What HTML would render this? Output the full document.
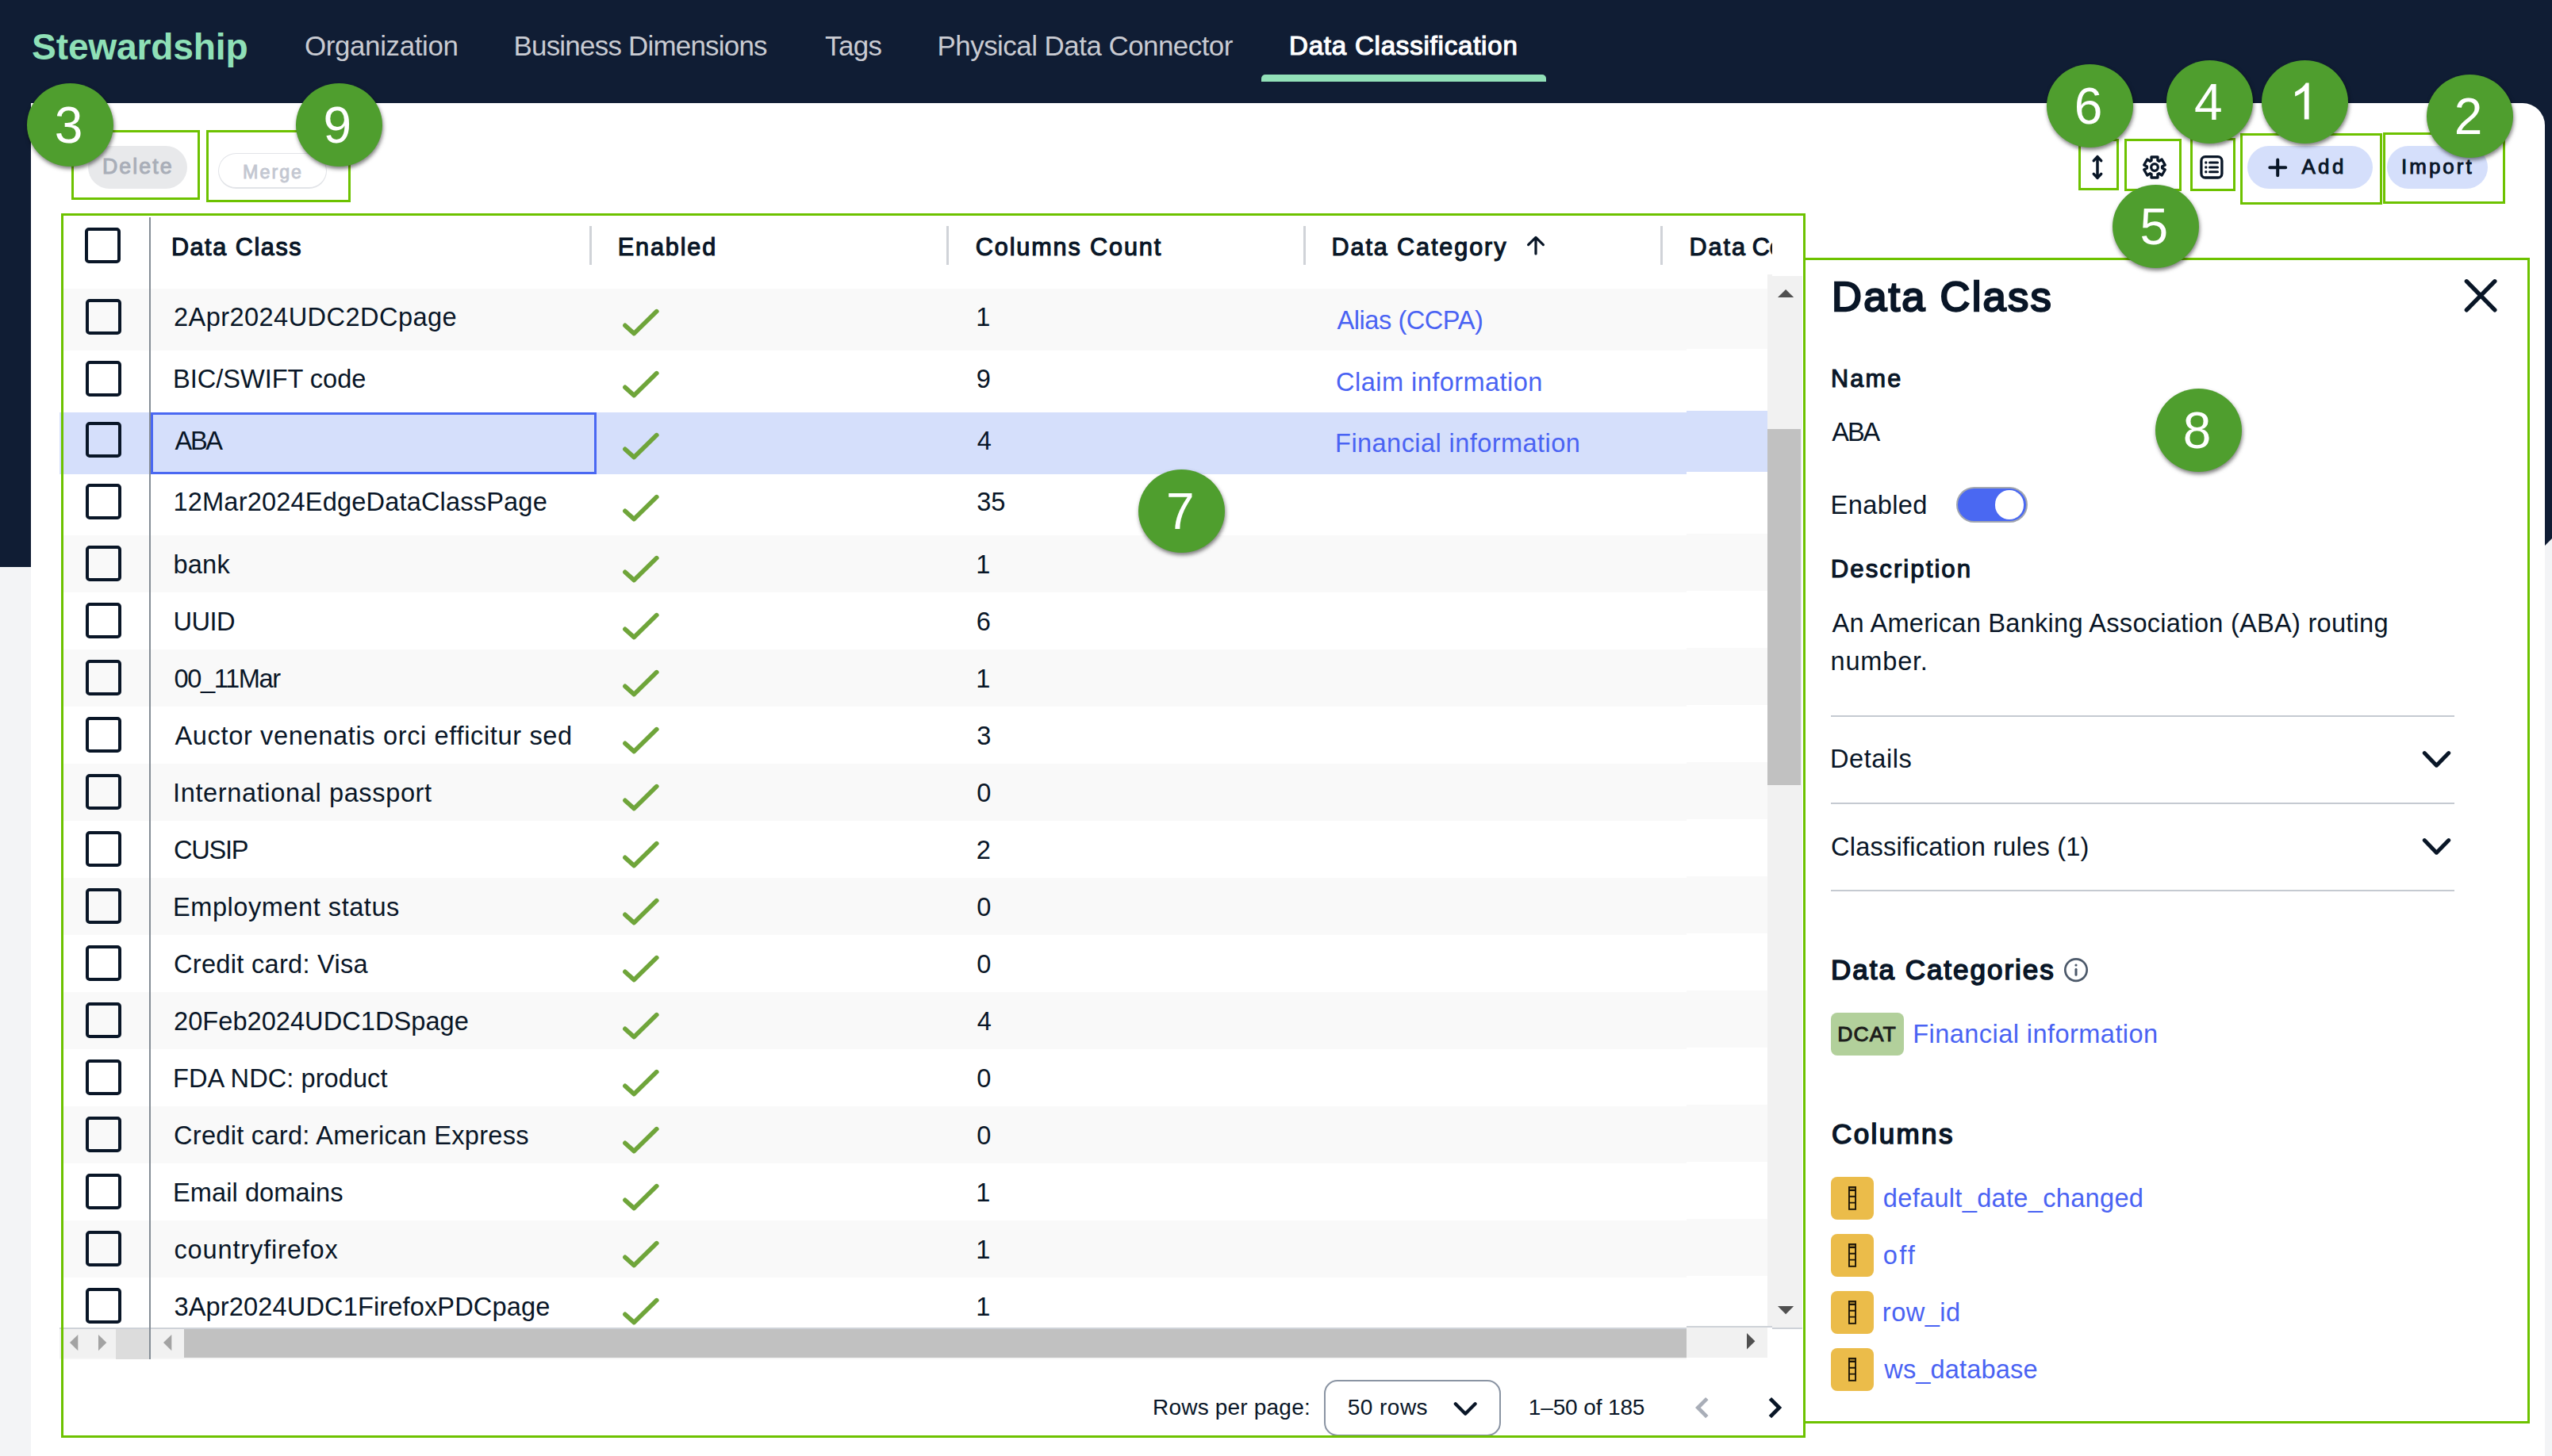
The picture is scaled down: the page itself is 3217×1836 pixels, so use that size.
<!DOCTYPE html>
<html lang="en"><head><meta charset="utf-8"><title>Stewardship - Data Classification</title>
<style>
html,body{margin:0;padding:0}
html{width:3217px;height:1836px;overflow:hidden}
body{width:3217px;height:1836px;position:relative;overflow:hidden;background:#f3f4f6;font-family:"Liberation Sans",sans-serif;color:#091627}
div,span,svg{position:absolute;box-sizing:border-box}
.t{line-height:0;white-space:nowrap}
.navy{left:0;top:0;width:3217px;height:715px;background:#101d34;clip-path:polygon(0 0,3217px 0,3217px 679px,3207px 689px,3207px 715px,0 715px)}
.card{left:39px;top:129.7px;width:3169px;height:1706.3px;background:#fff;border-top-right-radius:28px}
.ann{border:3px solid #6dc200;box-sizing:content-box}
.circ{width:109px;height:105px;border-radius:50%;background:#4f9e2e;color:#fff;font-size:64px;line-height:106.2px;text-align:center;text-indent:-4px;box-shadow:1px 3px 5px rgba(0,0,0,.5)}
.cb{width:45px;height:45px;border:4.5px solid #091627;border-radius:5px;left:108.4px}
.row{left:75px;width:2153px}
.row.g{background:#f9f9f9;left:80px;width:2148px}
.row.w{background:#fff;left:80px;width:2148px}
.row.s{background:#d5dffb}
.rp{left:2126px;width:102px}
.sep{width:3px;top:285px;height:49px;background:#d0d3d8}
.pill{border-radius:40px}
.div{left:2308px;width:786px;height:2.3px;background:#c5cad1}
.colic{left:2307.8px;width:54.2px;height:54px;border-radius:8px;background:#ebbc4a}
</style></head><body>
<div class="navy"></div>

<header>
<span class="t" style="left:40.1px;top:59.0px;font-size:46.2px;letter-spacing:-0.20px;font-weight:700;color:#8fe0b7;">Stewardship</span>
<nav>
<span class="t" style="left:383.9px;top:58.1px;font-size:34.9px;letter-spacing:-0.34px;color:#c9cbd2;">Organization</span>
<span class="t" style="left:647.5px;top:58.1px;font-size:34.9px;letter-spacing:-0.75px;color:#c9cbd2;">Business Dimensions</span>
<span class="t" style="left:1040.1px;top:58.1px;font-size:34.9px;letter-spacing:-0.63px;color:#c9cbd2;">Tags</span>
<span class="t" style="left:1181.6px;top:58.1px;font-size:34.9px;letter-spacing:-0.51px;color:#c9cbd2;">Physical Data Connector</span>
<span class="t" style="left:1625.0px;top:58.1px;font-size:33.1px;letter-spacing:0.77px;-webkit-text-stroke:1.22px;color:#fff;">Data Classification</span>
<div style="left:1590px;top:94px;width:359px;height:9px;background:#92e0b8;border-radius:5px 5px 0 0"></div>
</nav></header>
<main class="card" style="position:absolute"></main>
<div class="pill" style="left:111px;top:184px;width:125px;height:54px;background:#e8e9eb"></div>
<span class="t" style="left:128.9px;top:210.2px;font-size:26.8px;letter-spacing:2.04px;-webkit-text-stroke:0.99px;color:#a9aeb8;">Delete</span>
<div class="pill" style="left:275px;top:193px;width:137px;height:45px;background:#fff;border:1.6px solid #e2e4e8;border-bottom-width:2.2px"></div>
<span class="t" style="left:306.0px;top:216.5px;font-size:23.3px;letter-spacing:2.01px;-webkit-text-stroke:0.86px;color:#c3c7d1;">Merge</span>
<svg style="left:2630px;top:190px" width="28" height="42" viewBox="0 0 28 42" fill="none" stroke="#091627" stroke-width="3.5" stroke-linecap="round" stroke-linejoin="round"><path d="M14 7.6V34.4M9.3 12.6L14 7.6L18.7 12.6M9.3 29.4L14 34.4L18.7 29.4"/></svg>
<svg style="left:2696px;top:191px" width="40" height="40" viewBox="0 0 40 40" fill="none" stroke="#091627" stroke-width="3.3" stroke-linejoin="round"><path d="M16.09 11.23 L15.98 7.01 L24.02 7.01 L23.91 11.23 L25.63 12.23 L29.24 10.02 L33.26 16.98 L29.55 19.01 L29.55 20.99 L33.26 23.02 L29.24 29.98 L25.63 27.77 L23.91 28.77 L24.02 32.99 L15.98 32.99 L16.09 28.77 L14.37 27.77 L10.76 29.98 L6.74 23.02 L10.45 20.99 L10.45 19.01 L6.74 16.98 L10.76 10.02 L14.37 12.23Z"/><circle cx="20" cy="20" r="4.3"/></svg>
<svg style="left:2771px;top:194px" width="34" height="34" viewBox="0 0 34 34" fill="none" stroke="#091627" stroke-width="3.3" stroke-linecap="round"><rect x="3.9" y="3.7" width="26" height="26.3" rx="5"/><path d="M14.5 11H24.5M14.5 17H24.5M14.5 22.7H24.5" stroke-width="3"/><g fill="#091627" stroke="none"><circle cx="9.8" cy="11" r="1.7"/><circle cx="9.8" cy="17" r="1.7"/><circle cx="9.8" cy="22.7" r="1.7"/></g></svg>
<div class="pill" style="left:2833px;top:183.6px;width:158.4px;height:54.4px;background:#d5dffb"></div>
<svg style="left:2857px;top:197px" width="28" height="28" viewBox="0 0 28 28" fill="none" stroke="#091627" stroke-width="4" stroke-linecap="round"><path d="M14.2 4.4V24.2M4.3 14.3H24.2"/></svg>
<span class="t" style="left:2901.4px;top:210.4px;font-size:25.9px;letter-spacing:3.41px;-webkit-text-stroke:0.96px;">Add</span>
<div class="pill" style="left:3009px;top:183.6px;width:127px;height:54.4px;background:#d5dffb"></div>
<span class="t" style="left:3027.0px;top:210.4px;font-size:25.9px;letter-spacing:3.07px;-webkit-text-stroke:0.96px;">Import</span>
<section id="grid">
<div class="cb" style="left:106.6px;top:287px"></div>
<span class="t" style="left:215.9px;top:310.6px;font-size:30.6px;letter-spacing:1.56px;-webkit-text-stroke:1.13px;">Data Class</span>
<div class="sep" style="left:743px"></div>
<div class="sep" style="left:1193px"></div>
<div class="sep" style="left:1643px"></div>
<div class="sep" style="left:2093px"></div>
<span class="t" style="left:778.8px;top:310.6px;font-size:30.6px;letter-spacing:1.85px;-webkit-text-stroke:1.13px;">Enabled</span>
<span class="t" style="left:1229.8px;top:310.6px;font-size:30.6px;letter-spacing:1.88px;-webkit-text-stroke:1.13px;">Columns Count</span>
<span class="t" style="left:1678.5px;top:310.6px;font-size:30.6px;letter-spacing:1.89px;-webkit-text-stroke:1.13px;">Data Category</span>
<svg style="left:1920px;top:294px" width="32" height="32" viewBox="0 0 32 32" fill="none" stroke="#091627" stroke-width="3.2" stroke-linecap="round" stroke-linejoin="round"><path d="M16 26V6M6.6 14.6L16 5.4L25.4 14.6"/></svg>
<div style="left:2100px;top:280px;width:133.8px;height:70px;overflow:hidden"><span class="t" style="left:29.5px;top:30.6px;font-size:30.6px;letter-spacing:1.94px;-webkit-text-stroke:1.13px;">Data</span><span class="t" style="left:108.7px;top:30.6px;font-size:30.6px;-webkit-text-stroke:1.13px;">Concept</span></div>
<div id="body" style="left:0;top:364.4px;width:2228px;height:1309.6px;overflow:hidden">
<div class="row g" style="top:0.0px;height:77.75px"></div>
<div class="row g rp" style="left:2126px;width:102px;top:-2.2px;height:77.75px"></div>
<div class="cb" style="top:12.5px"></div>
<span class="t" style="left:219.0px;top:35.8px;font-size:32.6px;letter-spacing:0.42px;">2Apr2024UDC2DCpage</span>
<svg style="left:780px;top:20.0px" width="56" height="46" viewBox="0 0 56 46" fill="none" stroke="#6fa53a" stroke-width="5.6" stroke-linecap="round" stroke-linejoin="round"><path d="M7.9 26.3L19.3 36.6L47.8 8.6"/></svg>
<span class="t" style="left:1230.2px;top:35.8px;font-size:32.6px;">1</span>
<span class="t" style="left:1685.6px;top:39.5px;font-size:32.6px;letter-spacing:-0.48px;color:#4a63f3;">Alias (CCPA)</span>
<div class="row w" style="top:77.8px;height:77.75px"></div>
<div class="row w rp" style="left:2126px;width:102px;top:75.5px;height:77.75px"></div>
<div class="cb" style="top:90.2px"></div>
<span class="t" style="left:218.0px;top:113.6px;font-size:32.6px;letter-spacing:-0.03px;">BIC/SWIFT code</span>
<svg style="left:780px;top:97.8px" width="56" height="46" viewBox="0 0 56 46" fill="none" stroke="#6fa53a" stroke-width="5.6" stroke-linecap="round" stroke-linejoin="round"><path d="M7.9 26.3L19.3 36.6L47.8 8.6"/></svg>
<span class="t" style="left:1230.7px;top:113.6px;font-size:32.6px;">9</span>
<span class="t" style="left:1684.1px;top:117.3px;font-size:32.6px;letter-spacing:0.43px;color:#4a63f3;">Claim information</span>
<div class="row s" style="top:155.5px;height:77.75px"></div>
<div class="row s rp" style="left:2126px;width:102px;top:153.3px;height:77.75px"></div>
<div style="left:190px;top:155.5px;width:562px;height:77.75px;border:3.6px solid #4a68f2"></div>
<div class="cb" style="top:168.0px"></div>
<span class="t" style="left:220.5px;top:191.3px;font-size:32.6px;letter-spacing:-2.35px;">ABA</span>
<svg style="left:780px;top:175.5px" width="56" height="46" viewBox="0 0 56 46" fill="none" stroke="#6fa53a" stroke-width="5.6" stroke-linecap="round" stroke-linejoin="round"><path d="M7.9 26.3L19.3 36.6L47.8 8.6"/></svg>
<span class="t" style="left:1231.7px;top:191.3px;font-size:32.6px;">4</span>
<span class="t" style="left:1683.1px;top:195.0px;font-size:32.6px;letter-spacing:0.41px;color:#4a63f3;">Financial information</span>
<div class="row w" style="top:233.2px;height:77.75px"></div>
<div class="row w rp" style="left:2126px;width:102px;top:231.1px;height:77.75px"></div>
<div class="cb" style="top:245.8px"></div>
<span class="t" style="left:218.5px;top:269.1px;font-size:32.6px;letter-spacing:0.16px;">12Mar2024EdgeDataClassPage</span>
<svg style="left:780px;top:253.2px" width="56" height="46" viewBox="0 0 56 46" fill="none" stroke="#6fa53a" stroke-width="5.6" stroke-linecap="round" stroke-linejoin="round"><path d="M7.9 26.3L19.3 36.6L47.8 8.6"/></svg>
<span class="t" style="left:1231.2px;top:269.1px;font-size:32.6px;">35</span>
<div class="row g" style="top:311.0px;height:72px"></div>
<div class="row g rp" style="left:2126px;width:102px;top:308.8px;height:72px"></div>
<div class="cb" style="top:324.1px"></div>
<span class="t" style="left:218.5px;top:347.5px;font-size:32.6px;letter-spacing:0.18px;">bank</span>
<svg style="left:780px;top:331.0px" width="56" height="46" viewBox="0 0 56 46" fill="none" stroke="#6fa53a" stroke-width="5.6" stroke-linecap="round" stroke-linejoin="round"><path d="M7.9 26.3L19.3 36.6L47.8 8.6"/></svg>
<span class="t" style="left:1230.2px;top:347.5px;font-size:32.6px;">1</span>
<div class="row w" style="top:383.0px;height:72px"></div>
<div class="row w rp" style="left:2126px;width:102px;top:380.8px;height:72px"></div>
<div class="cb" style="top:396.1px"></div>
<span class="t" style="left:218.5px;top:419.5px;font-size:32.6px;letter-spacing:-0.54px;">UUID</span>
<svg style="left:780px;top:403.0px" width="56" height="46" viewBox="0 0 56 46" fill="none" stroke="#6fa53a" stroke-width="5.6" stroke-linecap="round" stroke-linejoin="round"><path d="M7.9 26.3L19.3 36.6L47.8 8.6"/></svg>
<span class="t" style="left:1230.7px;top:419.5px;font-size:32.6px;">6</span>
<div class="row g" style="top:455.0px;height:72px"></div>
<div class="row g rp" style="left:2126px;width:102px;top:452.8px;height:72px"></div>
<div class="cb" style="top:468.1px"></div>
<span class="t" style="left:219.5px;top:491.5px;font-size:32.6px;letter-spacing:-1.40px;">00_11Mar</span>
<svg style="left:780px;top:475.0px" width="56" height="46" viewBox="0 0 56 46" fill="none" stroke="#6fa53a" stroke-width="5.6" stroke-linecap="round" stroke-linejoin="round"><path d="M7.9 26.3L19.3 36.6L47.8 8.6"/></svg>
<span class="t" style="left:1230.2px;top:491.5px;font-size:32.6px;">1</span>
<div class="row w" style="top:527.0px;height:72px"></div>
<div class="row w rp" style="left:2126px;width:102px;top:524.8px;height:72px"></div>
<div class="cb" style="top:540.1px"></div>
<span class="t" style="left:220.5px;top:563.5px;font-size:32.6px;letter-spacing:0.63px;">Auctor venenatis orci efficitur sed</span>
<svg style="left:780px;top:547.0px" width="56" height="46" viewBox="0 0 56 46" fill="none" stroke="#6fa53a" stroke-width="5.6" stroke-linecap="round" stroke-linejoin="round"><path d="M7.9 26.3L19.3 36.6L47.8 8.6"/></svg>
<span class="t" style="left:1231.2px;top:563.5px;font-size:32.6px;">3</span>
<div class="row g" style="top:599.0px;height:72px"></div>
<div class="row g rp" style="left:2126px;width:102px;top:596.8px;height:72px"></div>
<div class="cb" style="top:612.1px"></div>
<span class="t" style="left:218.0px;top:635.5px;font-size:32.6px;letter-spacing:0.61px;">International passport</span>
<svg style="left:780px;top:619.0px" width="56" height="46" viewBox="0 0 56 46" fill="none" stroke="#6fa53a" stroke-width="5.6" stroke-linecap="round" stroke-linejoin="round"><path d="M7.9 26.3L19.3 36.6L47.8 8.6"/></svg>
<span class="t" style="left:1231.2px;top:635.5px;font-size:32.6px;">0</span>
<div class="row w" style="top:671.0px;height:72px"></div>
<div class="row w rp" style="left:2126px;width:102px;top:668.8px;height:72px"></div>
<div class="cb" style="top:684.1px"></div>
<span class="t" style="left:219.0px;top:707.5px;font-size:32.6px;letter-spacing:-1.26px;">CUSIP</span>
<svg style="left:780px;top:691.0px" width="56" height="46" viewBox="0 0 56 46" fill="none" stroke="#6fa53a" stroke-width="5.6" stroke-linecap="round" stroke-linejoin="round"><path d="M7.9 26.3L19.3 36.6L47.8 8.6"/></svg>
<span class="t" style="left:1230.7px;top:707.5px;font-size:32.6px;">2</span>
<div class="row g" style="top:743.0px;height:72px"></div>
<div class="row g rp" style="left:2126px;width:102px;top:740.8px;height:72px"></div>
<div class="cb" style="top:756.1px"></div>
<span class="t" style="left:218.0px;top:779.5px;font-size:32.6px;letter-spacing:0.52px;">Employment status</span>
<svg style="left:780px;top:763.0px" width="56" height="46" viewBox="0 0 56 46" fill="none" stroke="#6fa53a" stroke-width="5.6" stroke-linecap="round" stroke-linejoin="round"><path d="M7.9 26.3L19.3 36.6L47.8 8.6"/></svg>
<span class="t" style="left:1231.2px;top:779.5px;font-size:32.6px;">0</span>
<div class="row w" style="top:815.0px;height:72px"></div>
<div class="row w rp" style="left:2126px;width:102px;top:812.8px;height:72px"></div>
<div class="cb" style="top:828.1px"></div>
<span class="t" style="left:219.0px;top:851.5px;font-size:32.6px;letter-spacing:0.28px;">Credit card: Visa</span>
<svg style="left:780px;top:835.0px" width="56" height="46" viewBox="0 0 56 46" fill="none" stroke="#6fa53a" stroke-width="5.6" stroke-linecap="round" stroke-linejoin="round"><path d="M7.9 26.3L19.3 36.6L47.8 8.6"/></svg>
<span class="t" style="left:1231.2px;top:851.5px;font-size:32.6px;">0</span>
<div class="row g" style="top:887.0px;height:72px"></div>
<div class="row g rp" style="left:2126px;width:102px;top:884.8px;height:72px"></div>
<div class="cb" style="top:900.1px"></div>
<span class="t" style="left:219.0px;top:923.5px;font-size:32.6px;letter-spacing:0.03px;">20Feb2024UDC1DSpage</span>
<svg style="left:780px;top:907.0px" width="56" height="46" viewBox="0 0 56 46" fill="none" stroke="#6fa53a" stroke-width="5.6" stroke-linecap="round" stroke-linejoin="round"><path d="M7.9 26.3L19.3 36.6L47.8 8.6"/></svg>
<span class="t" style="left:1231.7px;top:923.5px;font-size:32.6px;">4</span>
<div class="row w" style="top:959.0px;height:72px"></div>
<div class="row w rp" style="left:2126px;width:102px;top:956.8px;height:72px"></div>
<div class="cb" style="top:972.1px"></div>
<span class="t" style="left:218.0px;top:995.5px;font-size:32.6px;letter-spacing:0.05px;">FDA NDC: product</span>
<svg style="left:780px;top:979.0px" width="56" height="46" viewBox="0 0 56 46" fill="none" stroke="#6fa53a" stroke-width="5.6" stroke-linecap="round" stroke-linejoin="round"><path d="M7.9 26.3L19.3 36.6L47.8 8.6"/></svg>
<span class="t" style="left:1231.2px;top:995.5px;font-size:32.6px;">0</span>
<div class="row g" style="top:1031.0px;height:72px"></div>
<div class="row g rp" style="left:2126px;width:102px;top:1028.8px;height:72px"></div>
<div class="cb" style="top:1044.1px"></div>
<span class="t" style="left:219.0px;top:1067.5px;font-size:32.6px;letter-spacing:0.27px;">Credit card: American Express</span>
<svg style="left:780px;top:1051.0px" width="56" height="46" viewBox="0 0 56 46" fill="none" stroke="#6fa53a" stroke-width="5.6" stroke-linecap="round" stroke-linejoin="round"><path d="M7.9 26.3L19.3 36.6L47.8 8.6"/></svg>
<span class="t" style="left:1231.2px;top:1067.5px;font-size:32.6px;">0</span>
<div class="row w" style="top:1103.0px;height:72px"></div>
<div class="row w rp" style="left:2126px;width:102px;top:1100.8px;height:72px"></div>
<div class="cb" style="top:1116.1px"></div>
<span class="t" style="left:218.0px;top:1139.5px;font-size:32.6px;letter-spacing:0.07px;">Email domains</span>
<svg style="left:780px;top:1123.0px" width="56" height="46" viewBox="0 0 56 46" fill="none" stroke="#6fa53a" stroke-width="5.6" stroke-linecap="round" stroke-linejoin="round"><path d="M7.9 26.3L19.3 36.6L47.8 8.6"/></svg>
<span class="t" style="left:1230.2px;top:1139.5px;font-size:32.6px;">1</span>
<div class="row g" style="top:1175.0px;height:72px"></div>
<div class="row g rp" style="left:2126px;width:102px;top:1172.8px;height:72px"></div>
<div class="cb" style="top:1188.1px"></div>
<span class="t" style="left:219.5px;top:1211.5px;font-size:32.6px;letter-spacing:0.83px;">countryfirefox</span>
<svg style="left:780px;top:1195.0px" width="56" height="46" viewBox="0 0 56 46" fill="none" stroke="#6fa53a" stroke-width="5.6" stroke-linecap="round" stroke-linejoin="round"><path d="M7.9 26.3L19.3 36.6L47.8 8.6"/></svg>
<span class="t" style="left:1230.2px;top:1211.5px;font-size:32.6px;">1</span>
<div class="row w" style="top:1247.0px;height:72px"></div>
<div class="row w rp" style="left:2126px;width:102px;top:1244.8px;height:72px"></div>
<div class="cb" style="top:1260.1px"></div>
<span class="t" style="left:219.5px;top:1283.5px;font-size:32.6px;letter-spacing:0.12px;">3Apr2024UDC1FirefoxPDCpage</span>
<svg style="left:780px;top:1267.0px" width="56" height="46" viewBox="0 0 56 46" fill="none" stroke="#6fa53a" stroke-width="5.6" stroke-linecap="round" stroke-linejoin="round"><path d="M7.9 26.3L19.3 36.6L47.8 8.6"/></svg>
<span class="t" style="left:1230.2px;top:1283.5px;font-size:32.6px;">1</span>
</div>
<div style="left:188px;top:274px;width:2.2px;height:1439.5px;background:#858d96"></div>
<div style="left:2228px;top:348px;width:44px;height:1326px;background:#f1f1f1"></div>
<div style="left:2228px;top:346px;width:6px;height:2px;background:#f1f1f1"></div>
<div style="left:2228px;top:541px;width:42px;height:449.3px;background:#c1c1c1"></div>
<svg style="left:2240.9px;top:364.8px" width="21" height="11" viewBox="0 0 21 11"><path d="M0 10.1L10.1 0L20.2 10.1Z" fill="#505050"/></svg>
<svg style="left:2240.8px;top:1646.8px" width="21" height="11" viewBox="0 0 21 11"><path d="M0 0L10.1 10.3L20.2 0Z" fill="#505050"/></svg>
<div style="left:75px;top:1674px;width:2051px;height:2px;background:#ced2d8"></div>
<div style="left:75px;top:1676px;width:2051px;height:36px;background:#f1f1f1"></div>
<div style="left:75px;top:1712px;width:2051px;height:2px;background:#f5f5f5"></div>
<div style="left:2126px;top:1672px;width:108px;height:2px;background:#ced2d8"></div>
<div style="left:2126px;top:1674px;width:102px;height:38px;background:#f1f1f1"></div>
<div style="left:2234px;top:1674px;width:38px;height:2px;background:#ced2d8"></div>
<div style="left:146px;top:1676px;width:42px;height:38px;background:#dcdcdc"></div>
<div style="left:232px;top:1676px;width:1894px;height:36px;background:#c1c1c1"></div>
<svg style="left:87.8px;top:1682.9px" width="11" height="21" viewBox="0 0 11 21"><path d="M10.3 0L0 10.1L10.3 20.2Z" fill="#a3a3a3"/></svg>
<svg style="left:123.9px;top:1682.9px" width="11" height="21" viewBox="0 0 11 21"><path d="M0 0L10.3 10.1L0 20.2Z" fill="#a3a3a3"/></svg>
<svg style="left:205.8px;top:1682.9px" width="11" height="21" viewBox="0 0 11 21"><path d="M10.3 0L0 10.1L10.3 20.2Z" fill="#a3a3a3"/></svg>
<svg style="left:2201.9px;top:1680.9px" width="11" height="21" viewBox="0 0 11 21"><path d="M0 0L10.4 10.2L0 20.4Z" fill="#505050"/></svg>
<div style="left:188px;top:1674px;width:2.2px;height:40px;background:#858d96"></div>
<span class="t" style="left:1453.1px;top:1775.2px;font-size:28px;letter-spacing:0.19px;">Rows per page:</span>
<div style="left:1669.4px;top:1740px;width:222.3px;height:71px;border:2.2px solid #8a94a3;border-radius:17px;background:#fff"></div>
<span class="t" style="left:1698.7px;top:1775.2px;font-size:28px;letter-spacing:0.48px;">50 rows</span>
<svg style="left:1827px;top:1762px" width="40" height="30" viewBox="0 0 40 30" fill="none" stroke="#091627" stroke-width="4.2" stroke-linecap="round" stroke-linejoin="round"><path d="M7.8 8.2L20.2 20.8L32.6 8.2"/></svg>
<span class="t" style="left:1926.8px;top:1775.2px;font-size:28px;letter-spacing:-0.13px;">1–50 of 185</span>
<svg style="left:2130px;top:1757px" width="30" height="36" viewBox="0 0 30 36" fill="none" stroke="#a9aeb8" stroke-width="4.8" stroke-linejoin="miter"><path d="M21.8 6.6L10.4 18.1L21.8 29.6"/></svg>
<svg style="left:2222px;top:1757px" width="30" height="36" viewBox="0 0 30 36" fill="none" stroke="#091627" stroke-width="4.8" stroke-linejoin="miter"><path d="M9.4 6.6L20.8 18.1L9.4 29.6"/></svg>
</section>
<aside>
<span class="t" style="left:2309.0px;top:373.5px;font-size:52.5px;letter-spacing:2.22px;-webkit-text-stroke:2.36px;">Data Class</span>
<svg style="left:3100px;top:346px" width="54" height="54" viewBox="0 0 54 54" fill="none" stroke="#091627" stroke-width="5.3" stroke-linecap="round"><path d="M9.3 8.7L44.9 44.9M44.9 8.7L9.3 44.9"/></svg>
<span class="t" style="left:2308.0px;top:476.6px;font-size:30.6px;letter-spacing:2.19px;-webkit-text-stroke:1.13px;">Name</span>
<span class="t" style="left:2309.3px;top:545.2px;font-size:32.6px;letter-spacing:-2.10px;">ABA</span>
<span class="t" style="left:2307.6px;top:637.0px;font-size:32.6px;letter-spacing:0.39px;">Enabled</span>
<div style="left:2466.3px;top:613.9px;width:89.3px;height:45.1px;border-radius:23px;background:#4a68f2;border:2px solid #a2a7b0"></div>
<div style="left:2514.5px;top:617.8px;width:36.8px;height:36.8px;border-radius:50%;background:#fff"></div>
<span class="t" style="left:2307.7px;top:717.8px;font-size:31.2px;letter-spacing:2.04px;-webkit-text-stroke:1.15px;">Description</span>
<span class="t" style="left:2309.6px;top:785.7px;font-size:32.6px;letter-spacing:0.25px;">An American Banking Association (ABA) routing</span>
<span class="t" style="left:2307.6px;top:834.0px;font-size:32.6px;letter-spacing:0.76px;">number.</span>
<div class="div" style="top:902px"></div>
<div class="div" style="top:1011.7px"></div>
<div class="div" style="top:1121.5px"></div>
<span class="t" style="left:2307.1px;top:957.2px;font-size:32.6px;letter-spacing:0.50px;">Details</span>
<span class="t" style="left:2308.1px;top:1067.6px;font-size:32.6px;letter-spacing:0.21px;">Classification rules (1)</span>
<svg style="left:3046px;top:939px" width="50" height="38" viewBox="0 0 50 38" fill="none" stroke="#091627" stroke-width="5" stroke-linecap="round" stroke-linejoin="round"><path d="M10.2 10.6L25.4 26.2L40.8 10.6"/></svg>
<svg style="left:3046px;top:1049px" width="50" height="38" viewBox="0 0 50 38" fill="none" stroke="#091627" stroke-width="5" stroke-linecap="round" stroke-linejoin="round"><path d="M10.2 10.6L25.4 26.2L40.8 10.6"/></svg>
<span class="t" style="left:2308.1px;top:1222.9px;font-size:35.0px;letter-spacing:1.98px;-webkit-text-stroke:1.61px;">Data Categories</span>
<svg style="left:2600px;top:1206px" width="34" height="34" viewBox="0 0 34 34"><circle cx="17" cy="17.1" r="13.7" fill="none" stroke="#4c596a" stroke-width="2.7"/><path d="M17 16.2V23.2" stroke="#4c596a" stroke-width="3" stroke-linecap="round"/><circle cx="17" cy="11" r="1.6" fill="#4c596a"/></svg>
<div style="left:2307.8px;top:1277px;width:92.1px;height:53.8px;border-radius:8px;background:#b2d09b"></div>
<span class="t" style="left:2316.3px;top:1303.5px;font-size:26.6px;letter-spacing:1.01px;-webkit-text-stroke:0.98px;color:#1d1d1b;">DCAT</span>
<span class="t" style="left:2411.2px;top:1304.2px;font-size:32.6px;letter-spacing:0.42px;color:#4a63f3;">Financial information</span>
<span class="t" style="left:2309.0px;top:1429.7px;font-size:35.0px;letter-spacing:2.39px;-webkit-text-stroke:1.61px;">Columns</span>
<div class="colic" style="top:1483.8px"><svg style="left:22.1px;top:12.2px" width="10" height="30" viewBox="0 0 10 30" fill="none" stroke="#1d1608" stroke-width="1.9"><rect x="1.6" y="1.8" width="6.8" height="3" fill="#a07f2e" stroke="none"/><rect x="0.95" y="0.95" width="8.1" height="27.9"/><path d="M1 4.95H9M1 12.7H9M1 20.6H9" stroke-width="1.9"/></svg></div>
<span class="t" style="left:2373.8px;top:1510.7px;font-size:32.6px;letter-spacing:0.30px;color:#4a63f3;">default_date_changed</span>
<div class="colic" style="top:1555.8px"><svg style="left:22.1px;top:12.2px" width="10" height="30" viewBox="0 0 10 30" fill="none" stroke="#1d1608" stroke-width="1.9"><rect x="1.6" y="1.8" width="6.8" height="3" fill="#a07f2e" stroke="none"/><rect x="0.95" y="0.95" width="8.1" height="27.9"/><path d="M1 4.95H9M1 12.7H9M1 20.6H9" stroke-width="1.9"/></svg></div>
<span class="t" style="left:2373.8px;top:1582.7px;font-size:32.6px;letter-spacing:2.23px;color:#4a63f3;">off</span>
<div class="colic" style="top:1627.8px"><svg style="left:22.1px;top:12.2px" width="10" height="30" viewBox="0 0 10 30" fill="none" stroke="#1d1608" stroke-width="1.9"><rect x="1.6" y="1.8" width="6.8" height="3" fill="#a07f2e" stroke="none"/><rect x="0.95" y="0.95" width="8.1" height="27.9"/><path d="M1 4.95H9M1 12.7H9M1 20.6H9" stroke-width="1.9"/></svg></div>
<span class="t" style="left:2372.8px;top:1654.7px;font-size:32.6px;letter-spacing:0.49px;color:#4a63f3;">row_id</span>
<div class="colic" style="top:1699.8px"><svg style="left:22.1px;top:12.2px" width="10" height="30" viewBox="0 0 10 30" fill="none" stroke="#1d1608" stroke-width="1.9"><rect x="1.6" y="1.8" width="6.8" height="3" fill="#a07f2e" stroke="none"/><rect x="0.95" y="0.95" width="8.1" height="27.9"/><path d="M1 4.95H9M1 12.7H9M1 20.6H9" stroke-width="1.9"/></svg></div>
<span class="t" style="left:2375.3px;top:1726.7px;font-size:32.6px;letter-spacing:0.13px;color:#4a63f3;">ws_database</span>
</aside>
<div class="ann" style="left:90px;top:164px;width:156.0px;height:82.0px"></div>
<div class="ann" style="left:260px;top:164px;width:176.0px;height:85.0px"></div>
<div class="ann" style="left:77px;top:269px;width:2193.0px;height:1538.0px"></div>
<div class="ann" style="left:2273px;top:325px;width:910.0px;height:1464.0px"></div>
<div class="ann" style="left:2620px;top:175px;width:45.0px;height:59.0px"></div>
<div class="ann" style="left:2678px;top:175px;width:66.0px;height:60.0px"></div>
<div class="ann" style="left:2761px;top:174px;width:51.0px;height:61.0px"></div>
<div class="ann" style="left:2824px;top:168px;width:173.0px;height:84.0px"></div>
<div class="ann" style="left:3004px;top:167px;width:148.0px;height:84.0px"></div>
<div class="circ" style="left:2851.0px;top:76.3px"><svg style="left:0;top:0" width="109" height="105" viewBox="0 0 109 105" role="img" aria-label="1"><path transform="translate(34.9,74.4) scale(0.0324,-0.0312)" d="M763 0H583V1147Q518 1085 412.5 1023T223 930V1104Q373 1174.5 485 1275T644 1470H763Z" fill="#fff"/></svg></div>
<div class="circ" style="left:3059.0px;top:94.4px">2</div>
<div class="circ" style="left:34.0px;top:105.3px">3</div>
<div class="circ" style="left:2731.4px;top:76.3px">4</div>
<div class="circ" style="left:2662.9px;top:233.0px">5</div>
<div class="circ" style="left:2580.0px;top:81.3px">6</div>
<div class="circ" style="left:1435.2px;top:591.8px">7</div>
<div class="circ" style="left:2717.0px;top:490.0px">8</div>
<div class="circ" style="left:372.9px;top:105.3px">9</div>
</body></html>
